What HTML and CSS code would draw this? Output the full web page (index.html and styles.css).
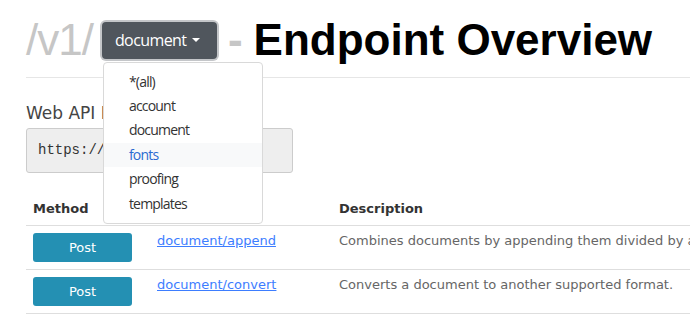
FILE: index.html
```html
<!DOCTYPE html>
<html lang="en">
<head>
  <meta charset="UTF-8">
  <title>Endpoint Overview</title>
  <link rel="stylesheet" href="styles.css">
</head>
<body>

  <div class="pagina">
    <h1 class="titulo">
      <span class="versao">/v1/</span>
      <span class="seletor">
        <button class="botao-seletor">document <span class="seta"></span></button>
        <ul class="menu">
          <li>*(all)</li>
          <li>account</li>
          <li>document</li>
          <li class="ativo">fonts</li>
          <li>proofing</li>
          <li>templates</li>
        </ul>
      </span>
      <span class="traco">-</span>
      <span class="nome">Endpoint Overview</span>
    </h1>
    <hr>

    <h5 class="subtitulo">Web API Endpoint</h5>
    <pre class="url">https://api.example.cloud/</pre>

    <table>
      <thead>
        <tr>
          <th class="col-metodo">Method</th>
          <th class="col-rota">Endpoint</th>
          <th>Description</th>
        </tr>
      </thead>
      <tbody>
        <tr>
          <td><span class="metodo">Post</span></td>
          <td><a href="#">document/append</a></td>
          <td>Combines documents by appending them divided by a page break.</td>
        </tr>
        <tr>
          <td><span class="metodo">Post</span></td>
          <td><a href="#">document/convert</a></td>
          <td>Converts a document to another supported format.</td>
        </tr>
      </tbody>
    </table>
  </div>

</body>
</html>
```

FILE: styles.css
```css
/* Estilos gerais */
html, body {
  overflow: hidden;
}

body {
  margin: 0;
  font-family: "DejaVu Sans", Arial, sans-serif;
  color: #212529;
  background-color: #fff;
}

.pagina {
  padding: 0 0 0 26px;
  width: 664px;
}

.titulo {
  display: flex;
  align-items: center;
  margin: 0;
  padding-top: 14px;
  height: 52px;
  font-family: "Liberation Sans", Arial, sans-serif;
  font-size: 44px;
  font-weight: bold;
  white-space: nowrap;
}

.versao {
  color: #c6c6c6;
  font-weight: normal;
  letter-spacing: -1px;
}

.traco {
  color: #c6c6c6;
  margin: 0 11px 0 11px;
}

.nome {
  color: #000;
}

.seletor {
  position: relative;
  margin-left: 9px;
}

.botao-seletor {
  font-family: "Open Sans", Arial, sans-serif;
  font-size: 16px;
  letter-spacing: -0.6px;
  color: #fff;
  background-color: #50565d;
  border: none;
  border-radius: 4px;
  box-shadow: 0 0 0 2px #c4c6c9;
  padding: 0 13px;
  height: 37px;
  width: 115px;
  display: flex;
  align-items: center;
  gap: 6px;
}

.seta {
  display: inline-block;
  border-top: 4px solid #fff;
  border-left: 4px solid transparent;
  border-right: 4px solid transparent;
}

.menu {
  position: absolute;
  top: 40px;
  left: 1px;
  width: 158px;
  margin: 0;
  padding: 7px 0;
  list-style: none;
  background-color: #fff;
  border: 1px solid #d9d9d9;
  border-radius: 4px;
  z-index: 2;
}

.menu li {
  font-family: "Open Sans", Arial, sans-serif;
  font-size: 14px;
  font-weight: normal;
  letter-spacing: -0.8px;
  color: #333;
  padding: 0 25px;
  line-height: 24.4px;
}

.menu li.ativo {
  color: #2a6bd1;
  background-color: #f8f9fa;
}

hr {
  margin: 11px 0 0;
  border: none;
  border-top: 1px solid #e6e6e6;
}

.subtitulo {
  margin: 25px 0 5px;
  font-size: 17px;
  font-weight: normal;
  color: #444;
}

.url {
  width: 243px;
  margin: 0;
  padding: 12px 11px;
  font-family: "Liberation Mono", monospace;
  font-size: 14px;
  line-height: 19px;
  color: #333;
  background-color: #eee;
  border: 1px solid #ccc;
  border-radius: 3px;
}

table {
  width: 760px;
  border-collapse: collapse;
  margin-top: 21px;
  font-size: 13px;
}

th, td {
  text-align: left;
  padding: 7px 7px;
  border-bottom: 1px solid #dedede;
  white-space: nowrap;
}

th {
  font-weight: bold;
  color: #333;
  padding-bottom: 9px;
}

td {
  color: #666;
  vertical-align: top;
  height: 29px;
}

.col-metodo {
  width: 110px;
}

.col-rota {
  width: 168px;
  color: transparent;
}

.metodo {
  display: block;
  width: 99px;
  line-height: 29px;
  text-align: center;
  color: #fff;
  background-color: #2490b3;
  border-radius: 3px;
  font-size: 13px;
}

a {
  color: #3d7dff;
}
```
